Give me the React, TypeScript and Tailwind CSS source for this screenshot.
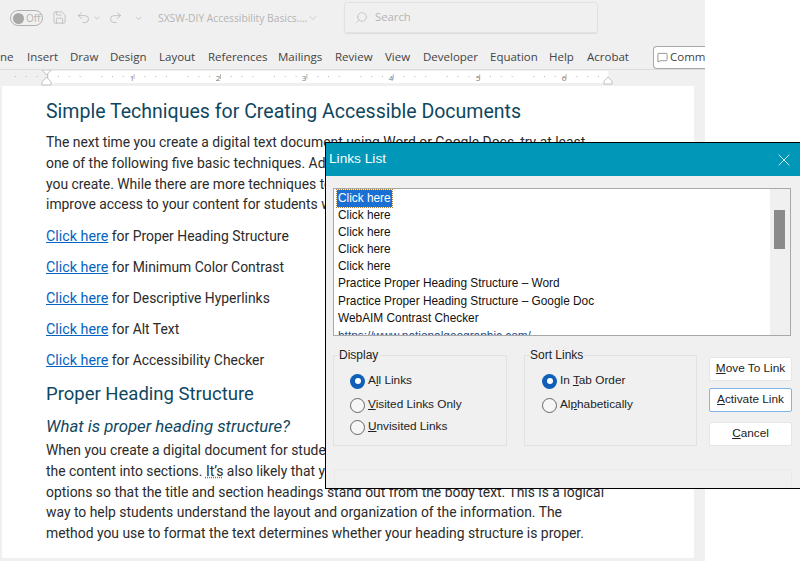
import { ChevronDown, MessageSquare, Redo2, Save, Search, Undo2, X } from "lucide-react";

const tabs = [
  { label: "ne", w: "w-[27px]" },
  { label: "Insert", w: "w-[43px]" },
  { label: "Draw", w: "w-[40px]" },
  { label: "Design", w: "w-[49px]" },
  { label: "Layout", w: "w-[49px]" },
  { label: "References", w: "w-[70px]" },
  { label: "Mailings", w: "w-[57px]" },
  { label: "Review", w: "w-[50px]" },
  { label: "View", w: "w-[38px]" },
  { label: "Developer", w: "w-[67px]" },
  { label: "Equation", w: "w-[59px]" },
  { label: "Help", w: "w-[38px]" },
  { label: "Acrobat", w: "w-[66px]" },
];

const links = [
  "Click here",
  "Click here",
  "Click here",
  "Click here",
  "Practice Proper Heading Structure – Word",
  "Practice Proper Heading Structure – Google Doc",
  "WebAIM Contrast Checker",
];

function Ruler() {
  const ticks = [];
  for (let i = 0; i < 56; i++) {
    const x = 4 + i * 10.8;
    if (i % 8 === 0) continue;
    ticks.push(<rect key={i} x={x} y={i % 4 === 0 ? 74 : 76} width="1" height={i % 4 === 0 ? 5 : 1} fill="#b8b8b8" />);
  }
  return (
    <svg width="705" height="16" viewBox="0 70 705 16" className="block">
      <rect x="0" y="70" width="705" height="16" fill="#f0f0f0" />
      <rect x="47" y="71" width="561" height="12" fill="#ffffff" />
      {ticks}
      {[
        [132, "1"],
        [218, "2"],
        [304, "3"],
        [391, "4"],
        [478, "5"],
        [564, "6"],
      ].map(([x, n]) => (
        <text key={n} x={x} y="81" fontSize="8" fill="#777" textAnchor="middle" fontFamily="Open Sans, sans-serif">
          {n}
        </text>
      ))}
      <path d="M42 70h9l-4.500 5z M42 85h9v-3l-4.500-5-4.500 5z" fill="#fff" stroke="#aaa" strokeWidth="0.7" />
      <path d="M604 84h8v-3l-4-4-4 4z" fill="#fff" stroke="#aaa" strokeWidth="0.7" />
    </svg>
  );
}

function TitleRow() {
  return (
    <div className="flex h-[45px] items-start text-[#b4b4b4]">
      <div className="mt-[10px] ml-[10px] flex h-[16px] w-[33px] items-center rounded-full border border-[#b0b0b0] pl-[2px]">
        <span className="h-[11px] w-[11px] rounded-full bg-[#a8a8a8]" />
        <span className="ml-[2px] text-[10px] leading-none">Off</span>
      </div>
      <Save size={15} strokeWidth={1.2} className="mt-[10px] ml-[9px]" />
      <Undo2 size={15} strokeWidth={1.2} className="mt-[10px] ml-[9px]" />
      <ChevronDown size={8} className="mt-[14px] ml-[2px]" />
      <Redo2 size={15} strokeWidth={1.2} className="mt-[10px] ml-[7px]" />
      <ChevronDown size={9} className="mt-[14px] ml-[11px]" />
      <span className="mt-[10px] ml-[15px] w-[147px] text-[10.300px] leading-[16px] whitespace-nowrap">
        SXSW-DIY Accessibility Basics....
      </span>
      <ChevronDown size={12} strokeWidth={1.2} className="mt-[12px] ml-[2px]" />
      <div className="mt-[2px] ml-[25px] flex h-[31px] w-[254px] items-center rounded-[3px] border border-[#e2e2e2] pl-[10px] shadow-[0_1px_1px_#dddddd]">
        <Search size={13} strokeWidth={1.2} className="-scale-x-100" />
        <span className="ml-[7px] text-[11.300px]">Search</span>
      </div>
    </div>
  );
}

function TabRow() {
  return (
    <div className="flex h-[25px] items-center border-b border-[#dcdcdc] text-[11.500px] text-[#444444]">
      {tabs.map((t) => (
        <span key={t.label} className={`${t.w} shrink-0 whitespace-nowrap`}>
          {t.label}
        </span>
      ))}
      <div className="flex h-[23px] flex-1 items-center overflow-hidden rounded-l-[4px] border border-r-0 border-[#a8a8a8] bg-white pl-[3px]">
        <MessageSquare size={11} strokeWidth={1.2} className="shrink-0" />
        <span className="ml-[2px]">Comm</span>
      </div>
    </div>
  );
}

function DocLink({ rest }: { rest: string }) {
  return (
    <p className="mb-[10.500px] leading-[20.500px] whitespace-nowrap">
      <span className="text-[14.300px] text-[#0563c1] underline">Click here</span> {rest}
    </p>
  );
}

function Page() {
  return (
    <div className="mx-[2px] h-[472px] w-[692px] overflow-hidden bg-white pt-[12px] pl-[44px] text-[13.900px] text-[#2b2b2b]">
      <h1 className="mb-[6px] text-[19.550px] leading-[28px] text-[#0f4761]">
        Simple Techniques for Creating Accessible Documents
      </h1>
      <div className="mb-[11px] leading-[20.800px] whitespace-nowrap">
        <p>The next time you create a digital text document using Word or Google Docs, try at least</p>
        <p>one of the following five basic techniques. Adding them will help the documents</p>
        <p>you create. While there are more techniques to learn, these will</p>
        <p>improve access to your content for students with disabilities.</p>
      </div>
      <DocLink rest="for Proper Heading Structure" />
      <DocLink rest="for Minimum Color Contrast" />
      <DocLink rest="for Descriptive Hyperlinks" />
      <DocLink rest="for Alt Text" />
      <DocLink rest="for Accessibility Checker" />
      <h2 className="mt-[10px] text-[18.500px] leading-[26px] text-[#0f4761]">Proper Heading Structure</h2>
      <h3 className="mt-[7px] text-[16.800px] leading-[24px] text-[#0f4761] italic">What is proper heading structure?</h3>
      <div className="mt-[2px] leading-[20.700px] whitespace-nowrap">
        <p>When you create a digital document for students, you will likely want to organize</p>
        <p>
          the content into sections.{" "}
          <span className="underline decoration-[#5b6fc9] decoration-dotted">It’s</span> also likely that you will use
          formatting
        </p>
        <p>options so that the title and section headings stand out from the body text. This is a logical</p>
        <p>way to help students understand the layout and organization of the information. The</p>
        <p>method you use to format the text determines whether your heading structure is proper.</p>
      </div>
    </div>
  );
}

function Radio({ on, children }: { on?: boolean; children: React.ReactNode }) {
  return (
    <div className="flex h-[16px] items-center">
      {on ? (
        <span className="flex h-[15px] w-[15px] items-center justify-center rounded-full bg-[#0f5fb8]">
          <span className="h-[6px] w-[6px] rounded-full bg-white" />
        </span>
      ) : (
        <span className="h-[15px] w-[15px] rounded-full border border-[#666666] bg-[#f6f6f6]" />
      )}
      <span className="ml-[3px] text-[11.800px] text-[#222222]">{children}</span>
    </div>
  );
}

function Group({ title, w, children }: { title: string; w: string; children: React.ReactNode }) {
  return (
    <div className={`relative h-[91px] ${w} border border-[#e2e2e2] pt-[17px]`}>
      <span className="absolute top-[-9px] left-[5px] bg-[#f0f0f0] pr-[1px] text-[12px] leading-[16px] text-[#222222]">
        {title}
      </span>
      {children}
    </div>
  );
}

function DlgButton({ focus, children }: { focus?: boolean; children: React.ReactNode }) {
  return (
    <div
      className={`flex h-[24px] items-center justify-center rounded-[2px] border bg-white text-[11.800px] text-[#222222] ${
        focus ? "border-[#7fb4e6]" : "border-[#e6e6e6]"
      }`}
    >
      {children}
    </div>
  );
}

function LinksDialog() {
  return (
    <div className="absolute top-[142px] left-[325px] h-[347px] w-[476px] border border-black bg-[#f0f0f0] font-['Liberation_Sans',sans-serif]">
      <div className="flex h-[33px] items-center justify-between bg-[#0097b9] pr-[6px] pl-[3px] text-white">
        <span className="text-[13.700px]">Links List</span>
        <X size={20} strokeWidth={1} />
      </div>
      <div className="mx-[7px] mt-[12px] flex h-[148px] w-[458px] border border-[#a8a8a8] bg-white">
        <div className="flex-1 overflow-hidden pt-[1px] pl-[3px] text-[11.850px] leading-[17.100px] text-[#111111]">
          <div className="w-fit bg-[#1a6fd4] px-[1px] text-white outline-1 outline-[#b08040] outline-dotted">
            Click here
          </div>
          {links.map((l, i) => (
            <div key={i} className="pl-[1px] whitespace-nowrap">
              {l}
            </div>
          ))}
          <div className="mt-[1px] pl-[1px] whitespace-nowrap text-[#1f4e8c]">https://www.nationalgeographic.com/</div>
        </div>
        <div className="flex w-[20px] justify-center bg-[#f0f0f0] pt-[21px] pr-[2px]">
          <span className="h-[39px] w-[11px] bg-[#8a8a8a]" />
        </div>
      </div>
      <div className="mx-[7px] mt-[19px] flex w-[459px]">
        <Group title="Display" w="w-[174px]">
          <div className="ml-[16px]">
            <Radio on>
              A<span className="underline">l</span>l Links
            </Radio>
            <div className="mt-[8px]">
              <Radio>
                <span className="underline">V</span>isited Links Only
              </Radio>
            </div>
            <div className="mt-[6px]">
              <Radio>
                <span className="underline">U</span>nvisited Links
              </Radio>
            </div>
          </div>
        </Group>
        <div className="ml-[17px]">
          <Group title="Sort Links" w="w-[173px]">
            <div className="ml-[17px]">
              <Radio on>
                In <span className="underline">T</span>ab Order
              </Radio>
              <div className="mt-[8px]">
                <Radio>
                  Al<span className="underline">p</span>habetically
                </Radio>
              </div>
            </div>
          </Group>
        </div>
        <div className="ml-[12px] flex w-[83px] flex-col pt-[2px]">
          <DlgButton>
            <span>
              <span className="underline">M</span>ove To Link
            </span>
          </DlgButton>
          <div className="mt-[7px]">
            <DlgButton focus>
              <span>
                <span className="underline">A</span>ctivate Link
              </span>
            </DlgButton>
          </div>
          <div className="mt-[10px]">
            <DlgButton>
              <span>
                <span className="underline">C</span>ancel
              </span>
            </DlgButton>
          </div>
        </div>
      </div>
      <div className="mx-[8px] mt-[23px] h-[18px] w-[458px] border border-b-0 border-[#eaeaea]" />
    </div>
  );
}

export default function App() {
  return (
    <div className="relative h-[561px] w-[800px] overflow-hidden bg-white font-['Roboto',sans-serif]">
      <div className="h-[561px] w-[705px] bg-[#f0f0f0]">
        <div className="font-['Open_Sans',sans-serif]">
          <TitleRow />
          <TabRow />
        </div>
        <Ruler />
        <Page />
      </div>
      <LinksDialog />
    </div>
  );
}
